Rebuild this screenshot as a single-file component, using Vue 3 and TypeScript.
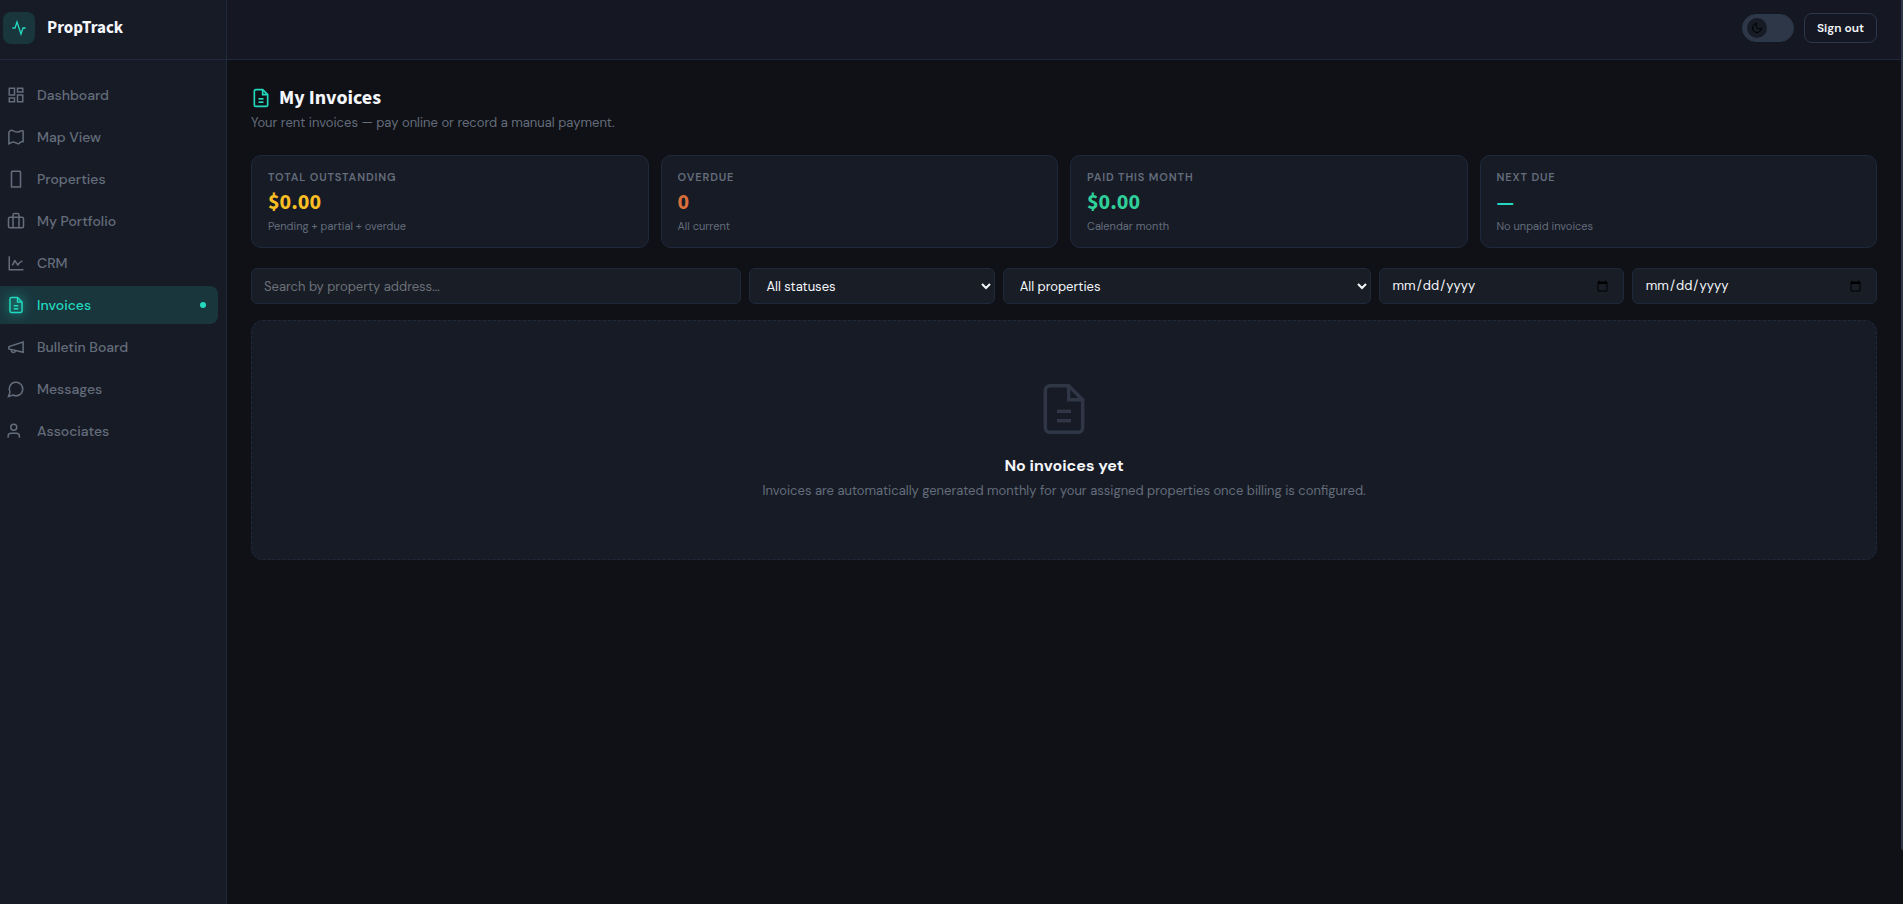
<script setup lang="ts">
import { ref } from 'vue'

interface NavItem {
  label: string
  paths: string[]
  active?: boolean
}

interface Stat {
  label: string
  value: string
  note: string
  tone: string
}

const filePaths = [
  'M14 2H6a2 2 0 0 0-2 2v16a2 2 0 0 0 2 2h12a2 2 0 0 0 2-2V8z',
  'M14 2v6h6',
  'M9 13h6',
  'M9 17h6',
]

const navItems: NavItem[] = [
  { label: 'Dashboard', paths: ['M3 3h7v9H3z', 'M14 3h7v5h-7z', 'M14 12h7v9h-7z', 'M3 16h7v5H3z'] },
  { label: 'Map View', paths: ['M2.5 5.5C4 3.5 6 2.5 8 3.5C11 5 13 6.5 16 5C18 4 20 3 21.5 4V18C19 17 17.5 20 15.5 21C13 21.5 11 18.5 8 18.5C6 18.5 4 20 2.5 21Z'] },
  { label: 'Properties', paths: ['M7 1.5h10a1 1 0 0 1 1 1v20H6v-20a1 1 0 0 1 1-1z'] },
  { label: 'My Portfolio', paths: ['M4 7h16a2 2 0 0 1 2 2v10a2 2 0 0 1-2 2H4a2 2 0 0 1-2-2V9a2 2 0 0 1 2-2z', 'M8 21V4a2 2 0 0 1 2-2h4a2 2 0 0 1 2 2v17'] },
  { label: 'CRM', paths: ['M3 3v18h19', 'M7 15l3.5-6 4 5.5L16.5 12l4-3', 'M9 9.5h3M13 14h3'] },
  { label: 'Invoices', paths: filePaths, active: true },
  { label: 'Bulletin Board', paths: ['M2.5 11.5L21.5 5.5V19L2.5 14.5z', 'M11.6 17a3 3 0 1 1-5.8-1.6'] },
  { label: 'Messages', paths: ['M7.9 20A9 9 0 1 0 4 16.1L2 22z'] },
  { label: 'Associates', paths: ['M9 3a4 4 0 1 0 0 8 4 4 0 0 0 0-8z', 'M16.5 21v-2a4 4 0 0 0-4-4h-7a4 4 0 0 0-4 4v2'] },
]

const stats: Stat[] = [
  { label: 'Total outstanding', value: '$0.00', note: 'Pending + partial + overdue', tone: 'amber' },
  { label: 'Overdue', value: '0', note: 'All current', tone: 'orange' },
  { label: 'Paid this month', value: '$0.00', note: 'Calendar month', tone: 'green' },
  { label: 'Next due', value: '—', note: 'No unpaid invoices', tone: 'teal' },
]

const search = ref('')
const status = ref('all')
const property = ref('all')
const fromDate = ref('')
const toDate = ref('')
</script>

<template>
  <div class="app">
    <aside class="sidebar">
      <div class="brand">
        <span class="brand-mark">
          <svg viewBox="0 0 24 24"><path d="M2 12h4l3-9 6 18 3-9h4" /></svg>
        </span>
        <span class="brand-name">PropTrack</span>
      </div>
      <nav class="nav">
        <a v-for="item in navItems" :key="item.label" href="#" class="nav-item" :class="{ active: item.active }">
          <svg viewBox="0 0 24 24"><path v-for="d in item.paths" :key="d" :d="d" /></svg>
          <span>{{ item.label }}</span>
          <i v-if="item.active" class="dot"></i>
        </a>
      </nav>
    </aside>

    <div class="page">
      <header class="topbar">
        <button type="button" class="theme" aria-label="Toggle theme">
          <span class="knob">
            <svg viewBox="0 0 24 24"><path d="M12 3a6 6 0 0 0 9 9 9 9 0 1 1-9-9z" /></svg>
          </span>
        </button>
        <button type="button" class="signout">Sign out</button>
      </header>

      <main class="content">
        <div class="heading">
          <h1>
            <svg viewBox="0 0 24 24"><path v-for="d in filePaths" :key="d" :d="d" /></svg>
            My Invoices
          </h1>
          <p>Your rent invoices — pay online or record a manual payment.</p>
        </div>

        <section class="stats">
          <article v-for="s in stats" :key="s.label" class="card">
            <h2>{{ s.label }}</h2>
            <strong :class="s.tone">{{ s.value }}</strong>
            <p>{{ s.note }}</p>
          </article>
        </section>

        <form class="filters" @submit.prevent>
          <input v-model="search" type="text" placeholder="Search by property address..." aria-label="Search by property address" />
          <select v-model="status" aria-label="Status">
            <option value="all">All statuses</option>
          </select>
          <select v-model="property" aria-label="Property">
            <option value="all">All properties</option>
          </select>
          <input v-model="fromDate" type="date" aria-label="From date" />
          <input v-model="toDate" type="date" aria-label="To date" />
        </form>

        <section class="empty">
          <svg viewBox="0 0 24 24"><path v-for="d in filePaths" :key="d" :d="d" /></svg>
          <h3>No invoices yet</h3>
          <p>Invoices are automatically generated monthly for your assigned properties once billing is configured.</p>
        </section>
      </main>
    </div>
    <div class="scroll"><div class="thumb"></div></div>
  </div>
</template>

<style>
body {
  background: #101116;
}
</style>

<style scoped>
.app {
  --heading: "Source Sans 3", "Source Sans Pro", "Noto Sans CJK SC", "Noto Sans", sans-serif;
  display: flex;
  min-height: 100vh;
  background: #101116;
  color: #f4f6fa;
  font: 14px/20px "DM Sans", Inter, Roboto, sans-serif;
}
.app * {
  box-sizing: border-box;
}
h1, h2, h3, p {
  margin: 0;
}
svg {
  flex: none;
  fill: none;
  stroke: currentColor;
  stroke-width: 2;
}
button, input, select {
  font: inherit;
  color: inherit;
}
.sidebar {
  flex: none;
  width: 227px;
  background: #171b26;
  border-right: 1px solid #1e293b;
}
.brand {
  display: flex;
  align-items: center;
  gap: 12px;
  height: 60px;
  padding: 0 3px 4px;
  border-bottom: 1px solid #1e293b;
}
.brand-mark {
  display: grid;
  place-items: center;
  width: 32px;
  height: 32px;
  border-radius: 8px;
  background: #19363d;
  color: #22d9bf;
}
.brand-mark svg {
  width: 16px;
  height: 16px;
}
.brand-name {
  font: bold 17px/24px var(--heading);
}
.nav {
  display: flex;
  flex-direction: column;
  gap: 4px;
  padding: 16px 8px 16px 0;
}
.nav-item {
  display: flex;
  align-items: center;
  gap: 12px;
  height: 38px;
  padding: 0 12px 0 7px;
  border-radius: 0 8px 8px 0;
  color: #646d7b;
  font-weight: 500;
  text-decoration: none;
}
.nav-item svg {
  width: 18px;
  height: 18px;
}
.nav-item.active {
  background: #19363d;
  color: #22d9bf;
}
.nav-item.active svg {
  filter: drop-shadow(0 0 6px #22d9bf);
}
.dot {
  width: 6px;
  height: 6px;
  margin-left: auto;
  border-radius: 50%;
  background: #22d9bf;
}
.page {
  flex: 1;
  min-width: 0;
}
.topbar {
  display: flex;
  align-items: center;
  justify-content: flex-end;
  gap: 10px;
  height: 60px;
  padding: 0 24px 4px;
  background: #151822;
  border-bottom: 1px solid #1e293b;
}
.theme {
  width: 52px;
  height: 28px;
  padding: 0 4px;
  border: 1px solid #29384a;
  border-radius: 14px;
  background: #2d3748;
}
.knob {
  display: grid;
  place-items: center;
  width: 20px;
  height: 20px;
  border-radius: 50%;
  background: #171b26;
  color: #000;
}
.knob svg {
  width: 12px;
  height: 12px;
}
.signout {
  height: 30px;
  padding: 0 12px;
  border: 1px solid #29384a;
  border-radius: 8px;
  background: #151822;
  font-size: 12px;
  font-weight: 600;
}
.content {
  padding: 24px;
}
.heading {
  margin-bottom: 22px;
}
h1 {
  display: flex;
  align-items: center;
  gap: 8px;
  font: bold 20px/28px var(--heading);
}
h1 svg {
  width: 20px;
  height: 20px;
  color: #22d9bf;
}
.heading p {
  font-size: 13px;
  line-height: 21px;
  color: #646d7b;
}
.stats {
  display: grid;
  grid-template-columns: repeat(4, 1fr);
  gap: 12px;
  margin-bottom: 20px;
}
.card {
  padding: 12px 16px;
  border: 1px solid #1e293b;
  border-radius: 10px;
  background: #171b26;
}
.card h2 {
  font-size: 11px;
  line-height: 18px;
  font-weight: 600;
  letter-spacing: 0.08em;
  text-transform: uppercase;
  color: #646d7b;
}
.card strong {
  display: block;
  font: bold 22px/32px var(--heading);
}
.card p {
  font-size: 11px;
  line-height: 17px;
  color: #646d7b;
}
.amber { color: #fbbf24; }
.orange { color: #d9703c; }
.green { color: #2fd09a; }
.teal { color: #22d9bf; }
.filters {
  display: grid;
  grid-template-columns: 4fr 2fr 3fr 2fr 2fr;
  gap: 8px;
  margin-bottom: 16px;
}
.filters input, .filters select {
  width: 100%;
  min-width: 0;
  height: 36px;
  padding: 0 12px;
  border: 1px solid #1e293b;
  border-radius: 6px;
  background-color: #191d26;
  font-size: 13px;
}
.filters ::placeholder {
  color: #6b7078;
}
.empty {
  display: flex;
  flex-direction: column;
  align-items: center;
  padding: 60px 24px 56px;
  border: 1px dashed #1e293b;
  border-radius: 12px;
  background: #171b26;
  text-align: center;
}
.empty svg {
  width: 56px;
  height: 56px;
  margin-bottom: 16px;
  color: #2f3747;
  stroke-width: 1.5;
}
.empty h3 {
  font-size: 16px;
  line-height: 26px;
  font-weight: 700;
}
.empty p {
  font-size: 13px;
  line-height: 24px;
  color: #646d7b;
}
.scroll {
  flex: none;
  width: 2px;
  height: 100vh;
}
.thumb {
  height: 94%;
  border-radius: 0 0 0 2px;
  background: #2d3748;
}
</style>
